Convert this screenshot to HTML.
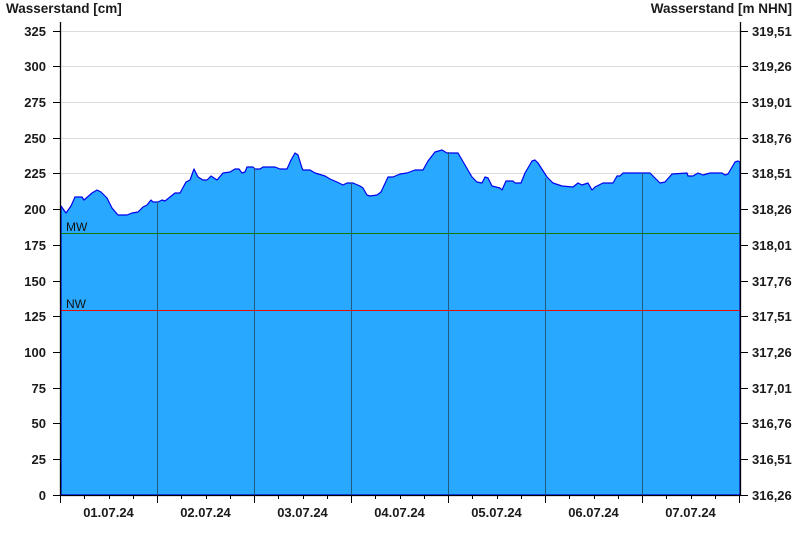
<!DOCTYPE html>
<html><head><meta charset="utf-8"><style>
html,body{margin:0;padding:0;background:#fff;}
svg{display:block;font-family:"Liberation Sans",Arial,sans-serif;}
</style></head><body>
<svg width="800" height="550" viewBox="0 0 800 550" xmlns="http://www.w3.org/2000/svg">
<g font-weight="bold" font-size="13.5" fill="#1a1a1a">
<text x="6" y="13">Wasserstand [cm]</text>
<text x="792" y="13" text-anchor="end">Wasserstand [m NHN]</text>
</g>
<g stroke="#dcdcdc" stroke-width="1">
<line x1="61" x2="740" y1="31.5" y2="31.5"/>
<line x1="61" x2="740" y1="66.5" y2="66.5"/>
<line x1="61" x2="740" y1="102.5" y2="102.5"/>
<line x1="61" x2="740" y1="138.5" y2="138.5"/>
<line x1="61" x2="740" y1="173.5" y2="173.5"/>
</g>
<path fill="#29a8ff" stroke="#0000ee" stroke-width="1.2" stroke-linejoin="round" d="M61,206 L66,213 L71,206 L75,197 L82,197 L84,200 L92,193 L97,190 L101,192 L107,198 L112,208 L118,215 L127,215 L132,213 L138,212 L143,207 L147,205 L151,200 L153,202 L158,202 L162,200 L165,201 L170,197 L175,193 L180,193 L186,182 L190,180 L194,169 L198,177 L203,180 L207,180 L211,176 L217,180 L223,173 L230,172 L235,169 L239,169 L242,173 L245,172 L247,167 L253,167 L255,169 L260,169 L263,167 L275,167 L280,169 L287,169 L291,160 L295,153 L298,155 L302,168 L303,170 L310,170 L315,173 L325,176 L330,179 L337,182 L343,185 L347,183 L353,183 L360,186 L363,188 L367,195 L370,196 L377,195 L381,192 L388,177 L393,177 L400,174 L407,173 L415,170 L423,170 L428,161 L435,152 L442,150 L447,153 L458,153 L465,165 L472,177 L477,182 L482,183 L485,177 L488,178 L492,186 L500,188 L502,190 L506,181 L513,181 L515,183 L521,183 L525,173 L532,161 L535,160 L538,163 L547,177 L553,183 L562,186 L573,187 L578,183 L582,185 L588,183 L592,190 L595,187 L603,183 L613,183 L617,176 L620,176 L623,173 L630,173 L650,173 L653,176 L660,183 L665,182 L672,174 L687,173 L688,176 L693,176 L698,173 L703,175 L710,173 L722,173 L725,175 L728,174 L735,162 L738,161 L740,162 L740,495 L61,495 Z"/>
<g stroke="#1f5a85" stroke-width="1">
<line x1="157.5" x2="157.5" y1="202" y2="495"/>
<line x1="254.5" x2="254.5" y1="168" y2="495"/>
<line x1="351.5" x2="351.5" y1="183" y2="495"/>
<line x1="448.5" x2="448.5" y1="152" y2="495"/>
<line x1="545.5" x2="545.5" y1="178" y2="495"/>
<line x1="642.5" x2="642.5" y1="173" y2="495"/>
</g>
<line x1="61" x2="740" y1="233.5" y2="233.5" stroke="#107a10" stroke-width="1"/>
<line x1="61" x2="740" y1="310.5" y2="310.5" stroke="#e01010" stroke-width="1"/>
<g font-size="12" fill="#111">
<text x="66" y="231">MW</text>
<text x="66" y="308">NW</text>
</g>
<g stroke="#000" stroke-width="1.3">
<line x1="60.5" x2="60.5" y1="22" y2="495"/>
<line x1="740.5" x2="740.5" y1="22" y2="495"/>
<line x1="60" x2="741" y1="495.5" y2="495.5"/>
</g>
<g stroke="#000" stroke-width="1">
<path d="M53,31.5H60M53,66.5H60M53,102.5H60M53,138.5H60M53,173.5H60M53,209.5H60M53,245.5H60M53,281.5H60M53,316.5H60M53,352.5H60M53,388.5H60M53,423.5H60M53,459.5H60M53,495.5H60"/>
<path d="M741,31.5H748M741,66.5H748M741,102.5H748M741,138.5H748M741,173.5H748M741,209.5H748M741,245.5H748M741,281.5H748M741,316.5H748M741,352.5H748M741,388.5H748M741,423.5H748M741,459.5H748M741,495.5H748"/>
<path d="M60.5,495V503M157.5,495V503M254.5,495V503M351.5,495V503M448.5,495V503M545.5,495V503M642.5,495V503M739.5,495V503"/>
<path d="M84.5,495V499M109.5,495V499M133.5,495V499M181.5,495V499M206.5,495V499M230.5,495V499M278.5,495V499M303.5,495V499M327.5,495V499M375.5,495V499M400.5,495V499M424.5,495V499M472.5,495V499M497.5,495V499M521.5,495V499M569.5,495V499M594.5,495V499M618.5,495V499M666.5,495V499M691.5,495V499M715.5,495V499"/>
</g>
<g font-weight="bold" font-size="13" fill="#1a1a1a" text-anchor="end">
<text x="46" y="36">325</text><text x="46" y="71">300</text><text x="46" y="107">275</text><text x="46" y="143">250</text><text x="46" y="178">225</text><text x="46" y="214">200</text><text x="46" y="250">175</text><text x="46" y="286">150</text><text x="46" y="321">125</text><text x="46" y="357">100</text><text x="46" y="393">75</text><text x="46" y="428">50</text><text x="46" y="464">25</text><text x="46" y="500">0</text>
</g>
<g font-weight="bold" font-size="13" fill="#1a1a1a">
<text x="752" y="36">319,51</text><text x="752" y="71">319,26</text><text x="752" y="107">319,01</text><text x="752" y="143">318,76</text><text x="752" y="178">318,51</text><text x="752" y="214">318,26</text><text x="752" y="250">318,01</text><text x="752" y="286">317,76</text><text x="752" y="321">317,51</text><text x="752" y="357">317,26</text><text x="752" y="393">317,01</text><text x="752" y="428">316,76</text><text x="752" y="464">316,51</text><text x="752" y="500">316,26</text>
</g>
<g font-weight="bold" font-size="13" fill="#1a1a1a" text-anchor="middle">
<text x="108.5" y="517">01.07.24</text><text x="205.5" y="517">02.07.24</text><text x="302.5" y="517">03.07.24</text><text x="399.5" y="517">04.07.24</text><text x="496.5" y="517">05.07.24</text><text x="593.5" y="517">06.07.24</text><text x="690.5" y="517">07.07.24</text>
</g>
</svg>
</body></html>
